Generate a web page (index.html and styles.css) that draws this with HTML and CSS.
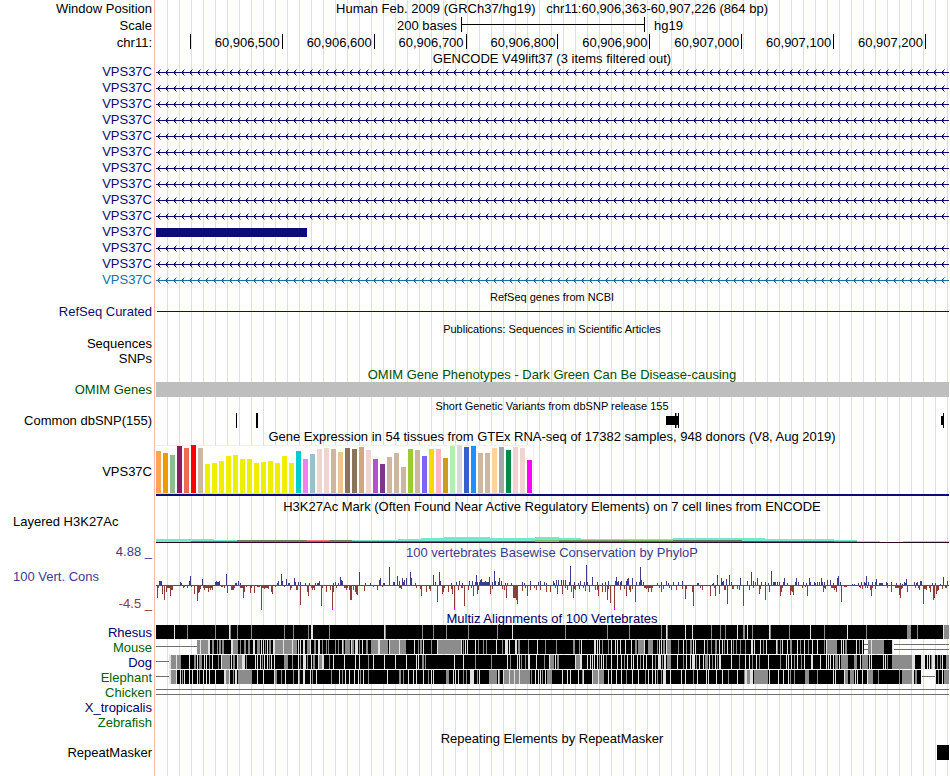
FILE: index.html
```html
<!DOCTYPE html>
<html lang="en">
<head>
  <meta charset="UTF-8">
  <meta name="viewport" content="width=device-width, initial-scale=1.0">
  <title>Human chr11:60,906,363-60,907,226</title>
  <link rel="stylesheet" href="styles.css">
</head>
<body>
  <main class="browser">
    <!-- Position, scale and ruler -->
    <div class="row ruler-row">
      <div class="label">Window Position</div>
      <div class="title">Human Feb. 2009 (GRCh37/hg19) &nbsp; chr11:60,906,363-60,907,226 (864 bp)</div>
    </div>
    <div class="row ruler-row">
      <div class="label">Scale</div>
      <div class="scale">
        <span class="scale-size">200 bases</span>
        <span class="scale-bar"></span>
        <span class="scale-db">hg19</span>
      </div>
    </div>
    <div class="row ruler-row">
      <div class="label">chr11:</div>
      <div class="ruler">
        <span></span>
        <span>60,906,500</span>
        <span>60,906,600</span>
        <span>60,906,700</span>
        <span>60,906,800</span>
        <span>60,906,900</span>
        <span>60,907,000</span>
        <span>60,907,100</span>
        <span>60,907,200</span>
      </div>
    </div>

    <!-- GENCODE -->
    <div class="row title-row tight"><div class="title">GENCODE V49lift37 (3 items filtered out)</div></div>
    <div class="row gene"><div class="label">VPS37C</div><svg class="track intron"></svg></div>
    <div class="row gene"><div class="label">VPS37C</div><svg class="track intron"></svg></div>
    <div class="row gene"><div class="label">VPS37C</div><svg class="track intron"></svg></div>
    <div class="row gene"><div class="label">VPS37C</div><svg class="track intron"></svg></div>
    <div class="row gene"><div class="label">VPS37C</div><svg class="track intron"></svg></div>
    <div class="row gene"><div class="label">VPS37C</div><svg class="track intron"></svg></div>
    <div class="row gene"><div class="label">VPS37C</div><svg class="track intron"></svg></div>
    <div class="row gene"><div class="label">VPS37C</div><svg class="track intron"></svg></div>
    <div class="row gene"><div class="label">VPS37C</div><svg class="track intron"></svg></div>
    <div class="row gene"><div class="label">VPS37C</div><svg class="track intron"></svg></div>
    <div class="row gene">
      <div class="label">VPS37C</div>
      <svg class="track" viewBox="0 0 794 16" preserveAspectRatio="none"><rect x="1" y="4" width="151" height="9"/></svg>
    </div>
    <div class="row gene"><div class="label">VPS37C</div><svg class="track intron"></svg></div>
    <div class="row gene"><div class="label">VPS37C</div><svg class="track intron"></svg></div>
    <div class="row gene alt"><div class="label">VPS37C</div><svg class="track intron"></svg></div>

    <!-- RefSeq -->
    <div class="row title-row"><div class="title small">RefSeq genes from NCBI</div></div>
    <div class="row gene">
      <div class="label">RefSeq Curated</div>
      <svg class="track" viewBox="0 0 794 16" preserveAspectRatio="none"><rect x="2" y="7" width="792" height="1"/></svg>
    </div>

    <!-- Publications -->
    <div class="row title-row"><div class="title small">Publications: Sequences in Scientific Articles</div></div>
    <div class="row item"><div class="label">Sequences</div></div>
    <div class="row item"><div class="label">SNPs</div></div>

    <!-- OMIM -->
    <div class="row title-row"><div class="title omim">OMIM Gene Phenotypes - Dark Green Can Be Disease-causing</div></div>
    <div class="row item">
      <div class="label omim">OMIM Genes</div>
      <svg class="track" viewBox="0 0 794 15" preserveAspectRatio="none"><rect x="1" y="0" width="793" height="15" fill="#bebebe"/></svg>
    </div>

    <!-- dbSNP -->
    <div class="row title-row"><div class="title small">Short Genetic Variants from dbSNP release 155</div></div>
    <div class="row item">
      <div class="label">Common dbSNP(155)</div>
      <svg class="track" viewBox="0 0 794 15" preserveAspectRatio="none">
        <path d="M81 0h1v15h-1z M101 0h2v15h-2z M511 3h13v9h-13z M520 0h1v15h-1z M523 0h1v15h-1z M786 3h3v9h-3z M788 0h1v15h-1z"/>
        <path d="M521 0h1v3h-1z M521 12h1v3h-1z" fill="#999"/>
      </svg>
    </div>

    <!-- GTEx -->
    <div class="row title-row tall"><div class="title">Gene Expression in 54 tissues from GTEx RNA-seq of 17382 samples, 948 donors (V8, Aug 2019)</div></div>
    <div class="row gtex"><div class="label">VPS37C</div><svg class="track" id="gtex"></svg></div>

    <!-- H3K27Ac -->
    <div class="row title-row"><div class="title">H3K27Ac Mark (Often Found Near Active Regulatory Elements) on 7 cell lines from ENCODE</div></div>
    <div class="row layered"><div class="label wide">Layered H3K27Ac</div><svg class="track" id="layered"></svg></div>

    <!-- Conservation -->
    <div class="row title-row">
      <div class="label cons-max">4.88 _</div>
      <div class="title cons-max">100 vertebrates Basewise Conservation by PhyloP</div>
    </div>
    <div class="row cons">
      <div class="cons-labels">
        <div class="label wide cons-max">100 Vert. Cons</div>
        <div class="label cons-min">-4.5 _</div>
      </div>
      <svg class="track" id="phylop"></svg>
    </div>

    <!-- Multiz -->
    <div class="row title-row multiz"><div class="title navy">Multiz Alignments of 100 Vertebrates</div></div>
    <div class="row item"><div class="label navy">Rhesus</div><svg class="track" id="rhesus"></svg></div>
    <div class="row item"><div class="label green">Mouse</div><svg class="track" id="mouse"></svg></div>
    <div class="row item"><div class="label navy">Dog</div><svg class="track" id="dog"></svg></div>
    <div class="row item"><div class="label green">Elephant</div><svg class="track" id="elephant"></svg></div>
    <div class="row item"><div class="label green">Chicken</div><svg class="track" id="chicken"></svg></div>
    <div class="row item"><div class="label navy">X_tropicalis</div></div>
    <div class="row item"><div class="label green">Zebrafish</div></div>

    <!-- RepeatMasker -->
    <div class="row title-row repeats"><div class="title">Repeating Elements by RepeatMasker</div></div>
    <div class="row item">
      <div class="label">RepeatMasker</div>
      <svg class="track" viewBox="0 0 794 15" preserveAspectRatio="none"><rect x="782" y="0" width="12" height="15"/></svg>
    </div>
  </main>
  <script src="tracks.js"></script>
</body>
</html>
```
FILE: styles.css
```css
body {
  margin: 0;
  background: #fff;
  color: #000;
  font-family: "Liberation Sans", Arial, Helvetica, sans-serif;
  font-size: 13px;
}

/* Pink edge of the data area and the blue guide lines every 12px */
.browser {
  box-sizing: border-box;
  min-height: 100vh;
  padding: 0 1px 16px 0;
  background-image:
    linear-gradient(#ffb4b4, #ffb4b4),
    repeating-linear-gradient(to right, transparent 0 11px, #dcdcfa 11px 12px);
  background-size: 1px 100%, 100% 100%;
  background-position: 154px 0, 156px 0;
  background-repeat: no-repeat;
}

.row {
  display: grid;
  grid-template-columns: 155px 1fr;
  height: 15px;
  line-height: 15px;
  white-space: nowrap;
}
.ruler-row {
  height: 17px;
  line-height: 17px;
}
.title-row {
  height: 16px;
  line-height: 16px;
}
.title-row .title {
  line-height: 18px;
}
.title-row.tall {
  height: 17px;
}
.title-row.tight {
  height: 13px;
}
.title-row.multiz {
  height: 14px;
}
.title-row.repeats {
  height: 15px;
}
.title-row.tight .title,
.title-row.multiz .title {
  line-height: 15px;
}

.label {
  box-sizing: border-box;
  padding-right: 3px;
  text-align: right;
}
.label.wide {
  padding-left: 13px;
  text-align: left;
}
.title {
  grid-column: 2;
  text-align: center;
}
.small {
  font-size: 11px;
}

.track {
  display: block;
  width: 100%;
  height: 100%;
  shape-rendering: crispEdges;
}

/* Scale bar */
.scale {
  display: grid;
  grid-template-columns: 306fr 184fr 304fr;
}
.scale-size {
  padding-right: 4px;
  text-align: right;
}
.scale-bar {
  height: 15px;
  border: solid #000;
  border-width: 0 1px;
  background: linear-gradient(#000, #000) 0 7px / 100% 1px no-repeat;
}
.scale-db {
  padding-left: 9px;
}

/* Base position ruler */
.ruler {
  display: grid;
  grid-template-columns: 36fr repeat(8, 92fr) 23fr;
}
.ruler span {
  height: 15px;
  padding-right: 2px;
  border-right: 1px solid #000;
  text-align: right;
}

/* Genes */
.gene {
  height: 16px;
  line-height: 16px;
  color: #0c0c78;
  fill: #0c0c78;
}
.gene.alt {
  color: #1470aa;
  fill: #1470aa;
}
.omim {
  color: #005000;
}

.gtex {
  height: 53px;
  line-height: 53px;
}
.layered {
  height: 30px;
}
.cons {
  height: 51px;
}
.cons-labels {
  display: flex;
  flex-direction: column;
  justify-content: space-between;
  padding-top: 9px;
}
.cons-max {
  color: #3c3c8c;
}
.cons-min {
  color: #8c3c3c;
}
.navy {
  color: #000064;
}
.green {
  color: #006400;
}
```
FILE: tracks.js
```js
const SVG_NS = 'http://www.w3.org/2000/svg';
const WIDTH = 794;
const LEFT = 155;

function setup(svg, height) {
  svg.setAttribute('viewBox', `0 0 ${WIDTH} ${height}`);
  svg.setAttribute('preserveAspectRatio', 'none');
}

function rect(svg, x, y, w, h, fill) {
  const el = document.createElementNS(SVG_NS, 'rect');
  el.setAttribute('x', x);
  el.setAttribute('y', y);
  el.setAttribute('width', w);
  el.setAttribute('height', h);
  if (fill) el.setAttribute('fill', fill);
  svg.appendChild(el);
}

function path(svg, d, opacity) {
  const el = document.createElementNS(SVG_NS, 'path');
  el.setAttribute('d', d);
  el.setAttribute('opacity', opacity);
  svg.appendChild(el);
}

// Introns: a line with a minus strand arrow every 8px
document.querySelectorAll('.intron').forEach(svg => {
  setup(svg, 16);
  rect(svg, 1, 8, 793, 1);
  let solid = '';
  let faint = '';
  const dot = (x, y) => `M${x} ${y}h1v1h-1z`;
  for (let x = 2; x < WIDTH - 3; x += 8) {
    solid += dot(x + 1, 7) + dot(x + 1, 9) + dot(x + 2, 6) + dot(x + 2, 10);
    faint += dot(x + 3, 5) + dot(x + 3, 11) + dot(x + 2, 7) + dot(x + 2, 9);
  }
  path(svg, solid, 1);
  path(svg, faint, 0.5);
});

// GTEx: height and colour of each tissue
const tissues = [
  [42, '#ffa54f'], [40, '#ee9a00'], [38, '#8fbc8f'], [47, '#8b1c62'], [45, '#ee6a50'], [48, '#ff0000'],
  [45, '#cdb79e'], [29, '#eeee00'], [30, '#eeee00'], [32, '#eeee00'], [37, '#eeee00'], [38, '#eeee00'],
  [34, '#eeee00'], [34, '#eeee00'], [30, '#eeee00'], [31, '#eeee00'], [32, '#eeee00'], [30, '#eeee00'],
  [37, '#eeee00'], [30, '#eeee00'], [42, '#00cdcd'], [34, '#ee82ee'], [39, '#9ac0cd'], [44, '#eed5d2'],
  [45, '#eed5d2'], [44, '#cdb79e'], [41, '#eec591'], [45, '#8b7355'], [44, '#8b7355'], [46, '#cdaa7d'],
  [43, '#eed5d2'], [34, '#b452cd'], [29, '#7a378b'], [36, '#cdb79e'], [40, '#cdb79e'], [26, '#cdb79e'],
  [44, '#9acd32'], [43, '#cdb79e'], [37, '#7a67ee'], [44, '#ffd700'], [44, '#ffb6c1'], [35, '#cd9b1d'],
  [47, '#b4eeb4'], [48, '#d9d9d9'], [46, '#3a5fcd'], [47, '#1e90ff'], [40, '#cdb79e'], [40, '#cdb79e'],
  [45, '#ffd39b'], [46, '#a6a6a6'], [43, '#008b45'], [46, '#eed5d2'], [45, '#eed5d2'], [33, '#ff00ff']
];
const gtex = document.getElementById('gtex');
setup(gtex, 53);
rect(gtex, 1, 0, 378, 49, '#eeeeee');
rect(gtex, 1, 1, 377, 47, '#ffffff');
tissues.forEach(([h, color], i) => rect(gtex, 1 + i * 7, 48 - h, 5, h, color));
rect(gtex, 1, 48, 378, 1, '#d8d8d8');
rect(gtex, 1, 49, 793, 2, '#0c0c78');

// H3K27Ac signal: start, end, top, height, colour
const layered = document.getElementById('layered');
setup(layered, 30);
[
  [156, 214, 25, 3, '#76e8ca'], [214, 237, 26, 2, '#76e8ca'], [191, 237, 27, 1, '#508c78'],
  [237, 352, 26, 2, '#787864'], [306, 329, 26, 1, '#f07878'],
  [352, 398, 26, 2, '#76e8ca'], [398, 421, 25, 3, '#76e8ca'], [421, 444, 24, 4, '#76e8ca'],
  [444, 490, 23, 5, '#76e8ca'], [490, 535, 24, 4, '#76e8ca'], [535, 559, 23, 5, '#76e8ca'],
  [559, 581, 24, 4, '#76e8ca'], [581, 673, 25, 3, '#76e8ca'], [673, 765, 24, 4, '#76e8ca'],
  [765, 834, 25, 3, '#76e8ca'], [834, 857, 26, 2, '#76e8ca'], [857, 880, 27, 1, '#76e8ca'],
  [903, 949, 27, 1, '#76e8ca'],
  [352, 535, 27, 1, '#786450'], [535, 559, 26, 2, '#78c464'], [559, 627, 26, 1, '#78a064'],
  [559, 742, 27, 1, '#786440'], [627, 673, 26, 1, '#78c464'], [673, 742, 26, 1, '#64785a'],
  [742, 834, 27, 1, '#506478'], [834, 857, 27, 1, '#46a08c']
].forEach(([x1, x2, y, h, color]) => rect(layered, x1 - LEFT, y, x2 - x1, h, color));
rect(layered, 1, 28, 793, 1, '#280a28');

// The dense tracks are stored in blocks: the block's left edge,
// then positions inside it counted in thirds of a pixel
const third = n => Math.floor(n / 3);

const phylopBlocks = [
  [150,
    '27-36:12 91:9 94:6 118:12 121:27 157:18 197-212:10 199:13 208:13 229:34 256:6 259:7 265:13 271:7 382:6 385:12 394:34 397:12 409:18 414:6 417:6 433:21 436:10 445:9 451:9 466:6 478:6 496:6 502-510:7 508:12 550:6 556:9 565:6 571:24 574:15 577:12 628:40 646:6 661:6 688:16 691:21 701-707:7 718:54 730-736:9 742:28 748:12 757:22 760:9 763:15 769:20 781:39 784:20 796:6',
    '22:38 25:10 37:28 43:44 49:22 52:8 55-60:10 61:32 64-69:16 100:8 103:6 112:10 124:6 133:28 142:48 145:24 148:20 151:13 160-190:10 163:14 175:20 181:14 187:14 214-220:5 223:10 232:25 244-252:14 253:8 271-280:10 280:40 283:22 289:6 301:25 304:10 313:25 322-330:5 334:74 337:10 340-358:8 343:13 355:13 364:20 367:26 376:5 403:6 421:16 424:8 439-444:16 451:60 472:22 475:32 484-496:10 487:16 493:16 514:64 517:8 529:22 541:16 547:74 550:20 559:10 583-595:10 589:15 598:14 601:44 604:46 610:16 616:20 619:26 622:31 643:18 670:7 682:16 697:6 748-756:9 754:13 799:10'],
  [420,
    '40:30 46:9 58:39 61:12 94:6 109:9 118:12 127:6 148-152:12 157:12 166:9 169:30 172:9 178-208:9 181:15 184:18 196:12 208:24 217:9 223:42 226:12 235:9 238:22 244:12 256:6 262:6 274:6 307:9 313:6 331:12 355:9 361:12 373:9 379:6 400:12 403:6 409:14 415:16 424:14 430:14 436:14 448:9 451:57 463:9 475:6 481:12 493:9 499:60 502:9 517:24 532:9 547:6 556:9 565:12 586:12 589:24 592:9 595:12 601:9 604:12 619:12 622:18 625:22 637:22 649:10 658:9 661:55 664:15 670:9 712:6 724:9 739:12 745:6 760:9 775:9 787:12',
    '1:12 4:32 19:22 28:12 31:18 52:52 67:28 70:22 73:9 85:22 94:12 97:28 103:74 115:14 124-130:10 133:64 145:14 154:10 160:34 172:26 175:14 211:26 217:12 247:12 253:14 259:38 280-286:38 286:40 289:44 292:56 307:18 316:9 322:34 331:14 343:9 349:14 361:14 379:20 391:22 406:10 412:26 427:26 436:10 442:14 454:22 460:38 463-470:12 466:16 478:12 490:9 496:18 508:22 526:14 532:14 535:34 547:20 556:20 562:44 565:12 571:54 583:74 601:14 613:12 619:34 628:16 631:22 637:12 646:50 673-700:10 679:13 685:20 694:20 718:9 724:20 730:12 748:9 754:16 769:16 787:12 796:42 799:12'],
  [690,
    '22:6 25:6 67:4 70:6 82:30 94:22 97:9 100:13 109:18 118:30 124:10 151:22 172:12 184:40 190:12 196:9 202:21 214:9 226:9 235:6 244:42 250:9 253:9 256:9 262:9 268:9 280:9 283:21 292:6 316:10 319:21 325:9 340:9 349:6 358:21 361-365:9 373:9 376:6 382:9 388:9 394:21 397:9 403:9 412:15 421:15 430:6 442:21 445:27 451:9 487:4 493:4 505:6 514:9 523:9 526:6 529:27 535:9 547:9 556:9 559:18 568-580:6 589:9 592:6 604:9 619:6 631:6 637:4 643:9 646:6 649:18 673:9 679:6 682:9 691-698:12 727:6 736:6 751:3 760:24 772:12',
    '7:22 10:62 31:9 37:14 61:32 73:10 76:32 88:26 103:14 106:14 112:56 127-134:12 142:12 148:16 160:62 178:14 190:8 208:28 211:12 226:44 238:22 271:32 274:22 277:9 301:30 304:18 307:20 310:31 337:8 346:6 352:34 400:22 403:9 406:12 424-440:9 433:16 439:22 454:50 463-473:6 508:6 511:10 517:12 526:8 532:8 541:14 544:32 547:10 556:12 592:9 604:20 616-625:8 625:10 628:30 631:38 634:12 637:9 652:20 676:9 685:9 688:16 700:56 703-712:12 709:14 718:9 721:20 730:44 733:40 739:28 742:18 745:14 757:12 766:8 769:10']
];

const phylop = document.getElementById('phylop');
setup(phylop, 51);
function drawScores(left, marks, up) {
  marks.split(' ').forEach(mark => {
    const [range, score] = mark.split(':');
    const [from, to] = range.split('-').map(Number);
    const x = left + third(from) - LEFT;
    const w = to ? third(to) - third(from) : 1;
    const h = Math.round(score / 3);
    rect(phylop, x, up ? 25 - h : 25, w, h, up ? '#3c3c8c' : '#8c3c3c');
    // Scores beyond the view limit get a magenta tip
    if (!up && h > 24) rect(phylop, x, 48, w, 2, '#ff00ff');
  });
}
rect(phylop, 1, 25, 793, 1, '#8c3c3c');
phylopBlocks.forEach(([left, up, down]) => {
  drawScores(left, up, true);
  drawScores(left, down, false);
});

// Multiz alignments: g is a weaker match, w is a poor match, the rest is black
const species = {
  rhesus: {
    solid: [[156, 949]],
    marks: [
      [150, 'w73 g112 g196 w238 g241 g262 g304 g403 g430 g475 w483-489 g538 w703 g706'],
      [420, 'g7 g40 g79 g145 g232 w277 g436 g562 g628 g724 w739 g742 w796'],
      [690, 'w7 g64 g91 g106 w142 g159-165 w172 g187 w238 g241 g298 w361 g403 w472 g529 g652-663 g682 w759 g762-777']
    ]
  },
  mouse: {
    single: [[156, 197]],
    double: [[864, 868], [894, 949]],
    solid: [[197, 864], [868, 893]],
    marks: [
      [150, 'g141-174 w150 w174-180 g186-192 g201 g207-213 g216-222 w244 w247 g251-266 g270 g283-290 g294-300 w309-315 g322-330 w334 w340 g345 w351 g357-363 w369 g376-442 w372 w399 w427 w444 w450 w459-467 g472-481 w481 g492 g497 w505-511 g517 g528 g535 g556 g565 w577 g580 g586-600 w604 g607-612 w615-624 g628 w636 g650-656 g663-715 w685 w688 w718 g720-768 w748 w793 g806'],
      [420, 'g0-8 w10 g34 g54-124 w52 w124 g129 w135 w142 w166 g176 g190 g198 w229 g246 w255-264 w268 w286-293 g294-300 g324 w351 g375 g408 g459-465 g478 w483 w522-528 w532 w538 g546 g565 w574 w586 w591 w601 w616 w634 g646-652 g655-672 w673 g685-699 g712 w718 w724 g730-736 w739 g741-753 g775 w790 g800'],
      [690, 'g0-6 w10 w16 w42 g52 g64 g76-81 w88 w97 g103 w112 w124 g130 g138 g152 g166 w184-189 w193 w210 g220 w230 w258 g262 g272 w278 w291 g300-308 w322 g332 w343 g355 w367 w382 g403 w408 g411-441 w454 w460 g466-472 w498-503 g507 w516 g534-582 w543 w606-611']
    ]
  },
  dog: {
    single: [[156, 169]],
    solid: [[169, 949]],
    marks: [
      [150, 'w57-63 g63-78 w78 g81-93 w118 g133-138 w141 g149-158 w162 w169 g178 w187 g205 w214 g218-240 w243 g250-256 w262 g264-276 w276-285 g288 w316 w322 w331 g336 w343 w352 g358 w364 w373 g402-414 g427 w444 g452 w459-468 g472 w483 g490-496 w505 g507-516 w516-522 g538 w550 w582 w616 w628 g655 w670 w703 w736 w769 w800 w806'],
      [420, 'g6-12 g16 w102 w130 g166 g214 w262 g272 w291 w298 g303 g315 w325-330 w348 g372 w387 g390-402 w405 g412-418 w465 g468-480 w480-486 w502 w511 w516 w522 w531 g537 w543 w550 g560 w574 w592 w604 g612 w622 w634 w640 w652 g662 w670 w678 w697 g705 w715-724 g727 w732-738 g741-753 w772 g790 w800'],
      [690, 'w0-3 w6-15 g18 w28 w40 g46-54 w58 g66-71 w76 g82 w87-93 w124 g148 w166-170 w178 g186 w199 g208 w234 g270 w288 w294 w304 g313 w322 g334 w343 w363-369 w390 w408 w415 w421 w430 g435-444 w447 g453-474 g492-502 w510 g516-534 w537 w544 w579 w586 g591 g606-666 w666-675 w693-705 w711 w717 g723 w727-737 g742 g751 w757 g768-777']
    ]
  },
  elephant: {
    single: [[156, 169], [922, 935]],
    solid: [[169, 921], [935, 949]],
    marks: [
      [150, 'w57-63 g63-78 w78 w92 g98 w104 w118 w127 w142 g148 w160 w169 w178 w196 w222-228 g228-237 w237 g249 w255-262 g264-307 w322 w340 w373 g376-382 g394 w406 g430 w445 g448 w459-467 w481 g486 w499 g544 w568 g577 w586 w598 w614 w626 g632 w640 g655 w712 g747-755 g760 w776 w790 w800'],
      [420, 'w10 g26 w34 w40 g80-88 w100 w106 w115 g130 g140 w151-164 g172 w178 g207-231 w234 g238 g249-330 w250 w267 w282 w298 g334 w345 w354 w361 g366 w376 g382-396 w426 w442 w452 w475 g486 w490 g520-552 w517 w534 w565 w574 w590 w604 g619 w637 w655 g676 w685 w697 w706 g712 g724 w730-738 w750 w784 w796'],
      [690, 'g10 w22 w50 w55 w79 w97 g115 w142 g162 w166-171 g172-180 w181-191 g192-234 w237 w264 w279 w294 g300 g313 g345-357 g381 w430 w436 w462 g465-474 g480-492 w496 w502 w516 w531 g534-549 g564 g628 g636-666 w666-672 g675-681 w735 g744-749 w756 g762-777']
    ]
  },
  chicken: {
    double: [[156, 949]],
    solid: [],
    marks: []
  }
};

Object.entries(species).forEach(([id, data]) => {
  const svg = document.getElementById(id);
  setup(svg, 15);
  (data.single || []).forEach(([a, b]) => rect(svg, a - LEFT, 6, b - a, 1, '#6e6e6e'));
  (data.double || []).forEach(([a, b]) => {
    rect(svg, a - LEFT, 4, b - a, 1, '#6e6e6e');
    rect(svg, a - LEFT, 9, b - a, 1, '#6e6e6e');
  });
  data.solid.forEach(([a, b]) => rect(svg, a - LEFT, 0, b - a, 14, '#000000'));
  data.marks.forEach(([left, marks]) => {
    marks.split(' ').forEach(mark => {
      const [from, to] = mark.slice(1).split('-').map(Number);
      const w = to ? third(to) - third(from) : 1;
      rect(svg, left + third(from) - LEFT, 0, w, 14, mark[0] === 'g' ? '#8c8c8c' : '#e1e1e1');
    });
  });
});
```
